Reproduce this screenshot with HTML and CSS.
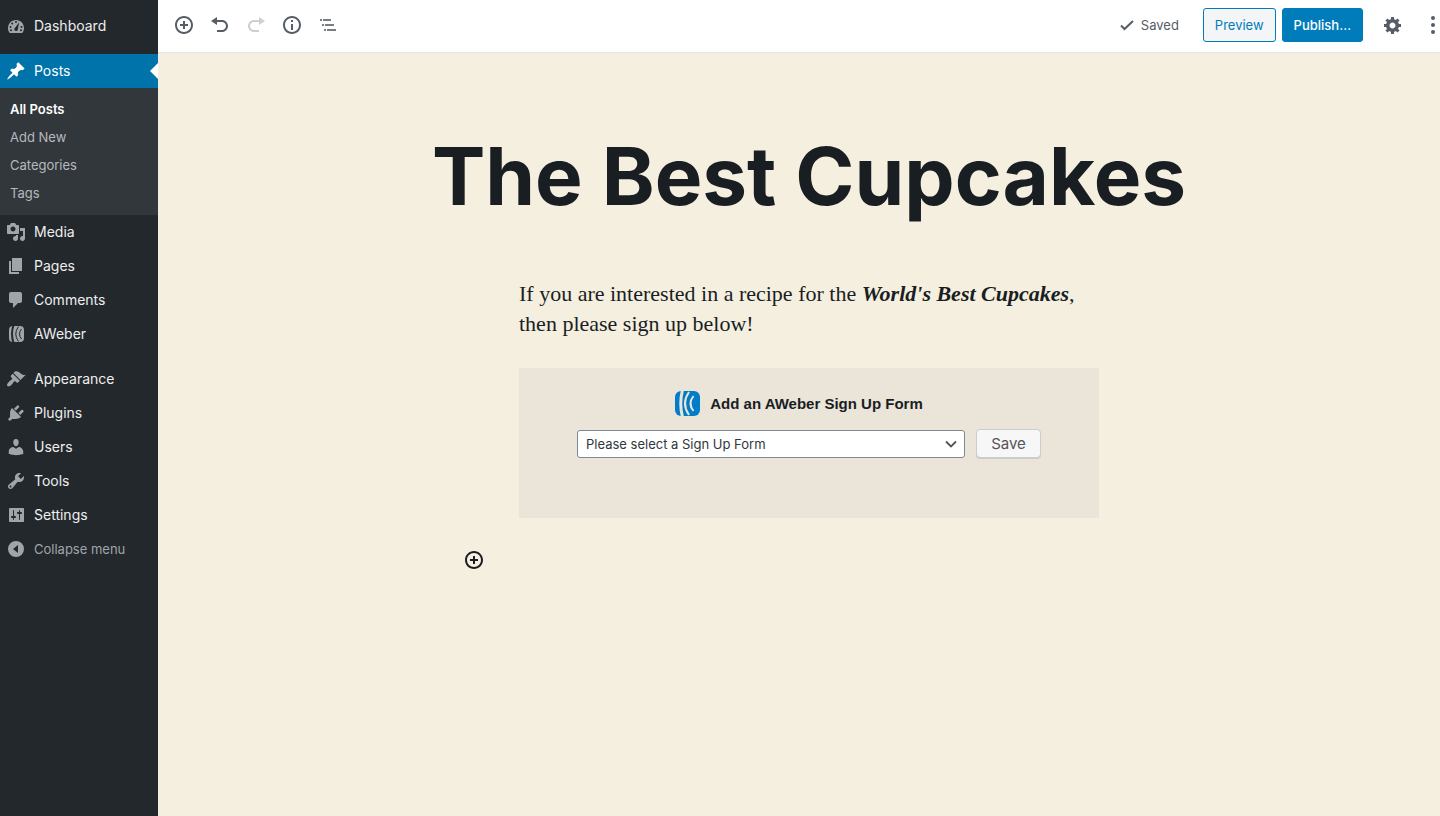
FILE: index.html
```html
<!DOCTYPE html>
<html lang="en">
<head>
<meta charset="utf-8">
<title>Edit Post</title>
<link rel="stylesheet" href="styles.css">
</head>
<body>
<div class="app">
  <nav class="sidebar" aria-label="Main menu">
    <ul class="menu">
      <li><a class="menu-link" href="#"><svg class="icon" viewBox="0 0 20 20"><path fill-rule="evenodd" d="M3.76 17h12.48c1.34-1.63 1.76-3.18 1.76-5 0-4.42-3.58-8-8-8s-8 3.58-8 8c0 1.82.42 3.37 1.76 5zM10 5a1 1 0 1 1 0 2 1 1 0 0 1 0-2zM6.200 6.500a1 1 0 1 1 0 2 1 1 0 0 1 0-2zM13.200 6.200L11.800 13.400c-.3 2.400-3.800 2-3.500-.3.100-.5.300-.9.600-1.200zM4.500 10a1 1 0 1 1 0 2 1 1 0 0 1 0-2zM15.500 10a1 1 0 1 1 0 2 1 1 0 0 1 0-2zM5 13.200a1 1 0 1 1 0 2 1 1 0 0 1 0-2zM15 13.200a1 1 0 1 1 0 2 1 1 0 0 1 0-2z"/></svg>Dashboard</a></li>
      <li class="menu-group">
        <a class="menu-link is-current" href="#"><svg class="icon" viewBox="0 0 20 20"><path d="M10.440 3.020l1.820-1.820 6.360 6.350-1.830 1.820c-1.050-.68-2.480-.57-3.410.36l-.75.75c-.92.930-1.040 2.350-.35 3.410l-1.830 1.820-2.410-2.410-2.800 2.790c-.42.420-3.380 2.710-3.800 2.290s1.860-3.390 2.280-3.810l2.790-2.790L4.100 9.360l1.830-1.820c1.050.690 2.480.570 3.400-.36l.75-.75c.930-.92 1.050-2.350.36-3.410z"/></svg>Posts</a>
        <ul class="submenu">
          <li><a class="is-active" href="#">All Posts</a></li>
          <li><a href="#">Add New</a></li>
          <li><a href="#">Categories</a></li>
          <li><a href="#">Tags</a></li>
        </ul>
      </li>
      <li><a class="menu-link" href="#"><svg class="icon" viewBox="0 0 20 20"><path fill-rule="evenodd" d="M13 11V4c0-.55-.45-1-1-1h-1.670L9 1H5L3.670 3H2c-.55 0-1 .45-1 1v7c0 .55.45 1 1 1h10c.55 0 1-.45 1-1zM7 4.500c1.380 0 2.500 1.120 2.500 2.500S8.380 9.500 7 9.500 4.500 8.380 4.500 7 5.620 4.500 7 4.500zM14 6h5v10.500c0 1.380-1.120 2.500-2.500 2.500S14 17.880 14 16.500s1.120-2.500 2.500-2.500c.17 0 .34.020.5.050V9h-3V6zm-4 8.050V13h2v3.500c0 1.380-1.120 2.500-2.500 2.500S7 17.880 7 16.500 8.120 14 9.500 14c.17 0 .34.020.5.050z"/></svg>Media</a></li>
      <li><a class="menu-link" href="#"><svg class="icon" viewBox="0 0 20 20"><path d="M6 15V2h10v13H6zm-1 1h8v2H3V5h2v11z"/></svg>Pages</a></li>
      <li><a class="menu-link" href="#"><svg class="icon" viewBox="0 0 20 20"><path d="M5 2h9c1.100 0 2 .9 2 2v7c0 1.100-.9 2-2 2h-2l-5 5v-5H5c-1.100 0-2-.9-2-2V4c0-1.100.9-2 2-2z"/></svg>Comments</a></li>
      <li><a class="menu-link" href="#"><svg class="icon" viewBox="0 0 20 20"><rect x="3" y="2" width="15" height="16" rx="4"/><g class="waves"><path d="M7.500 1Q4.500 10 7.500 19" stroke-width="2"/><path d="M12.500 2.500Q7 10 12.500 17.500M15.500 5Q11.500 10 15.500 15"/></g></svg>AWeber</a></li>
      <li class="menu-group"><a class="menu-link" href="#"><svg class="icon" viewBox="0 0 20 20"><path d="M14.480 11.060L7.410 3.990l1.500-1.500c.5-.56 2.300-.47 3.510.32 1.210.8 1.430 1.280 2.910 2.100 1.180.64 2.450 1.260 4.450.85zm-.71.71L6.700 4.700 4.930 6.470c-.39.39-.39 1.020 0 1.410l1.060 1.060c.39.39.39 1.030 0 1.420-.6.6-1.430 1.110-2.210 1.690-.35.26-.7.53-1.010.84C1.430 14.230.4 16.080 1.400 17.070c.99 1 2.840-.03 4.180-1.360.31-.31.58-.66.85-1.020.57-.78 1.080-1.610 1.690-2.210.39-.39 1.020-.39 1.410 0l1.060 1.060c.39.39 1.020.39 1.410 0z"/></svg>Appearance</a></li>
      <li><a class="menu-link" href="#"><svg class="icon" viewBox="0 0 20 20"><path d="M13.110 4.360L9.870 7.600 8 5.730l3.240-3.240c.35-.34 1.050-.2 1.560.32.52.51.66 1.210.31 1.550zm-8 1.770l.91-1.120 9.010 9.010-1.190.84c-.71.71-2.630 1.160-3.820 1.160H6.140L4.900 17.260c-.59.59-1.540.59-2.120 0-.59-.58-.59-1.530 0-2.120l1.240-1.240v-3.880c0-1.130.4-3.190 1.090-3.890zm7.260 3.970l3.240-3.240c.34-.35 1.040-.21 1.550.31.52.51.66 1.210.31 1.550l-3.240 3.250z"/></svg>Plugins</a></li>
      <li><a class="menu-link" href="#"><svg class="icon" viewBox="0 0 20 20"><path d="M10 9.250c-2.270 0-2.730-3.440-2.730-3.440C7 4.020 7.820 2 9.970 2c2.160 0 2.980 2.020 2.710 3.810 0 0-.41 3.440-2.680 3.440zm0 2.570L12.720 10c2.390 0 4.520 2.330 4.520 4.530v2.490s-3.650 1.130-7.240 1.130c-3.650 0-7.240-1.130-7.240-1.130v-2.490c0-2.250 1.940-4.480 4.470-4.480z"/></svg>Users</a></li>
      <li><a class="menu-link" href="#"><svg class="icon" viewBox="0 0 20 20"><path fill-rule="evenodd" d="M16.680 9.770c-1.340 1.340-3.300 1.670-4.950.99l-5.410 6.520c-.99.99-2.590.99-3.580 0s-.99-2.590 0-3.570l6.520-5.420c-.68-1.650-.35-3.610.99-4.950 1.280-1.280 3.120-1.620 4.720-1.060l-2.890 2.890 2.820 2.820 2.860-2.870c.53 1.580.18 3.390-1.080 4.650zM3.810 16.210c.4.39 1.040.39 1.430 0 .4-.4.4-1.040 0-1.430-.39-.4-1.030-.4-1.430 0-.39.39-.39 1.030 0 1.430z"/></svg>Tools</a></li>
      <li><a class="menu-link" href="#"><svg class="icon" viewBox="0 0 20 20"><path fill-rule="evenodd" d="M18 16V4c0-.7-.3-1-1-1H4c-.7 0-1 .3-1 1v12c0 .7.3 1 1 1h13c.7 0 1-.3 1-1zM8 11h1c.55 0 1 .45 1 1s-.45 1-1 1H8v1.500c0 .28-.22.5-.5.5s-.5-.22-.5-.5V13H6c-.55 0-1-.45-1-1s.45-1 1-1h1V5.500c0-.28.22-.5.5-.5s.5.22.5.5V11zm5-2h-1c-.55 0-1-.45-1-1s.45-1 1-1h1V5.500c0-.28.22-.5.5-.5s.5.22.5.5V7h1c.55 0 1 .45 1 1s-.45 1-1 1h-1v5.500c0 .28-.22.5-.5.5s-.5-.22-.5-.5V9z"/></svg>Settings</a></li>
      <li><button class="menu-link collapse" type="button"><svg class="icon" viewBox="0 0 20 20"><path fill-rule="evenodd" d="M10 2a8 8 0 1 1 0 16 8 8 0 0 1 0-16zM12 6l-5 4 5 4z"/></svg>Collapse menu</button></li>
    </ul>
  </nav>

  <div class="editor">
    <header class="topbar">
      <div class="tools">
        <button class="tool" type="button" aria-label="Add block"><svg class="icon" viewBox="0 0 20 20"><path d="M10 1c-5 0-9 4-9 9s4 9 9 9 9-4 9-9-4-9-9-9zm0 16c-3.900 0-7-3.100-7-7s3.100-7 7-7 7 3.100 7 7-3.100 7-7 7zm1-11H9v3H6v2h3v3h2v-3h3V9h-3V6z"/></svg></button>
        <button class="tool" type="button" aria-label="Undo"><svg class="icon" viewBox="0 0 20 20"><path d="M12 5H7V2L1 6l6 4V7h5c2.200 0 4 1.800 4 4s-1.800 4-4 4H7v2h5c3.300 0 6-2.700 6-6s-2.700-6-6-6z"/></svg></button>
        <button class="tool" type="button" aria-label="Redo" disabled><svg class="icon" viewBox="0 0 20 20"><path d="M8 5h5V2l6 4-6 4V7H8c-2.200 0-4 1.800-4 4s1.800 4 4 4h5v2H8c-3.300 0-6-2.700-6-6s2.700-6 6-6z"/></svg></button>
        <button class="tool" type="button" aria-label="Content structure"><svg class="icon" viewBox="0 0 20 20"><path d="M10 1c-5 0-9 4-9 9s4 9 9 9 9-4 9-9-4-9-9-9zm0 16c-3.900 0-7-3.100-7-7s3.100-7 7-7 7 3.100 7 7-3.100 7-7 7zM9 5h2v2H9zM9 9h2v6H9z"/></svg></button>
        <button class="tool" type="button" aria-label="Block navigation"><svg class="icon" viewBox="0 0 20 20"><path d="M2 4h2v2H2zM5 4h8v2H5zM4 9h2v2H4zM7 9h9v2H7zM6 14h2v2H6zM9 14h9v2H9z" opacity=".8"/></svg></button>
      </div>
      <div class="actions">
        <span class="saved"><svg class="check" viewBox="0 0 16 16"><path d="M2 8.500l3.500 3.500L14 4"/></svg>Saved</span>
        <button class="button preview" type="button">Preview</button>
        <button class="button publish" type="button">Publish…</button>
        <button class="tool settings" type="button" aria-label="Settings"><svg class="icon" viewBox="0 0 20 20"><path fill-rule="evenodd" d="M18 12h-2.180c-.17.7-.44 1.350-.81 1.930l1.540 1.540-2.100 2.100-1.540-1.540c-.58.36-1.230.63-1.910.79V19H8v-2.180c-.68-.16-1.330-.43-1.910-.79l-1.540 1.540-2.120-2.120 1.540-1.540c-.36-.58-.63-1.230-.79-1.910H1V9.030h2.170c.16-.7.44-1.350.8-1.940L2.430 5.550l2.100-2.100 1.540 1.540c.58-.37 1.240-.64 1.930-.81V2h3v2.180c.68.16 1.330.43 1.910.79l1.540-1.540 2.120 2.120-1.540 1.540c.36.59.64 1.240.8 1.940H18V12zm-8.500 1.500c1.660 0 3-1.340 3-3s-1.340-3-3-3-3 1.340-3 3 1.340 3 3 3z"/></svg></button>
        <button class="tool more" type="button" aria-label="More options"><svg class="icon" viewBox="0 0 20 20"><circle cx="10" cy="3" r="2"/><circle cx="10" cy="10" r="2"/><circle cx="10" cy="17" r="2"/></svg></button>
      </div>
    </header>

    <main class="canvas">
      <h1 class="post-title">The Best Cupcakes</h1>
      <div class="post-body">
        <p class="paragraph">If you are interested in a recipe for the <strong><em>World's Best Cupcakes</em></strong>, then please sign up below!</p>
        <form class="signup">
          <label class="signup-title" for="form-select"><svg class="logo" viewBox="0 0 25 25"><rect width="25" height="25" rx="6"/><g class="waves"><path d="M7.500-1Q4 12.500 7.500 26" stroke-width="3"/><path d="M14 1Q6 12.500 14 24M18.500 5Q12.500 12.500 18.500 20"/></g></svg>Add an AWeber Sign Up Form</label>
          <div class="signup-row">
            <select class="select" id="form-select"><option>Please select a Sign Up Form</option></select>
            <button class="save" type="button">Save</button>
          </div>
        </form>
      </div>
      <div class="appender">
        <button class="tool dark" type="button" aria-label="Add block"><svg class="icon" viewBox="0 0 20 20"><path d="M10 1c-5 0-9 4-9 9s4 9 9 9 9-4 9-9-4-9-9-9zm0 16c-3.900 0-7-3.100-7-7s3.100-7 7-7 7 3.100 7 7-3.100 7-7 7zm1-11H9v3H6v2h3v3h2v-3h3V9h-3V6z"/></svg></button>
      </div>
    </main>
  </div>
</div>
</body>
</html>
```
FILE: styles.css
```css
* { box-sizing: border-box; }

body {
  margin: 0;
  font-family: Inter, sans-serif;
  font-size: 13px;
  color: #191e23;
}

button, select { font: inherit; }
ul { list-style: none; margin: 0; padding: 0; }
a { text-decoration: none; }

.app { display: flex; min-height: 100vh; }

.icon { width: 20px; height: 20px; fill: currentColor; flex: none; }
.waves { fill: none; stroke: #23282d; stroke-width: 1; }

/* Sidebar */
.sidebar { width: 158px; flex: none; padding-top: 9px; background: #23282d; }
.menu-group { margin-top: 11px; }

.menu-link {
  display: flex;
  align-items: center;
  gap: 8px;
  width: 100%;
  height: 34px;
  padding: 0 6px;
  border: 0;
  background: none;
  color: #eee;
  font-size: 14px;
  line-height: 18px;
}
.menu-link .icon { color: #a0a5aa; }

.is-current { position: relative; background: #0073aa; color: #fff; }
.is-current .icon { color: #fff; }
.is-current::after {
  content: "";
  position: absolute;
  right: 0;
  top: 9px;
  border: 8px solid transparent;
  border-left-width: 0;
  border-right-color: #fff;
}

.submenu { padding: 7px 0 8px; background: #32373c; }
.submenu a { display: block; padding: 0 10px; line-height: 28px; color: #b4b9be; }
.submenu .is-active { color: #fff; font-weight: 600; }
.collapse { color: #a0a5aa; font-size: 13px; }

/* Editor header */
.editor { flex: 1; min-width: 0; display: flex; flex-direction: column; background: #f5efe0; }

.topbar {
  display: flex;
  justify-content: space-between;
  height: 53px;
  padding: 0 0 2px 8px;
  background: #fff;
  border-bottom: 1px solid #e2e4e7;
  overflow: hidden;
}
.tools, .actions { display: flex; align-items: center; }

.tool {
  display: flex;
  align-items: center;
  justify-content: center;
  width: 36px;
  height: 36px;
  padding: 0;
  border: 0;
  background: none;
  color: #555d66;
}
.tool:disabled { color: #ccd0d4; }
.tool.dark { color: #191e23; }

.saved { display: flex; align-items: center; gap: 6px; margin-right: 24px; color: #555d66; }
.check { width: 16px; height: 16px; fill: none; stroke: currentColor; stroke-width: 2; }

.button { height: 34px; padding: 0 11px; border: 1px solid #007cba; border-radius: 3px; }
.preview { margin-right: 6px; background: #f3f5f6; color: #007cba; }
.publish { background: #007cba; color: #fff; font-weight: 500; }
.settings { margin-left: 12px; }
.more { width: 20px; margin: 0 -3px 0 12px; }

/* Post */
.canvas { flex: 1; padding: 78px 0 40px 20px; }

.post-title {
  margin: 0;
  text-align: center;
  font-size: 80px;
  font-weight: 700;
  line-height: 90px;
}

.post-body { max-width: 580px; margin: 58px auto 0; }

.paragraph {
  margin: 0 0 29px;
  font-family: "Liberation Serif", serif;
  font-size: 22px;
  line-height: 30px;
}

.signup {
  display: flex;
  flex-direction: column;
  align-items: center;
  gap: 13px;
  min-height: 150px;
  padding: 23px 58px;
  background: #ebe4d9;
}
.signup-title {
  display: flex;
  align-items: center;
  gap: 10px;
  margin-right: 20px;
  font-family: "Liberation Sans", sans-serif;
  font-size: 15px;
  font-weight: 700;
}
.logo { width: 25px; height: 25px; fill: #007cc8; }
.logo .waves { stroke: #ebe4d9; stroke-width: 2; }

.signup-row { display: flex; align-items: center; gap: 11px; width: 100%; }

.select {
  flex: 1;
  height: 28px;
  padding: 0 8px;
  appearance: none;
  border: 1px solid #7e8993;
  border-radius: 3px;
  background: #fff url("data:image/svg+xml,%3Csvg xmlns='http://www.w3.org/2000/svg' viewBox='0 0 12 12'%3E%3Cpath d='M1 3.500l5 5 5-5' fill='none' stroke='%23555' stroke-width='1.800'/%3E%3C/svg%3E") no-repeat right 7px center / 12px 12px;
  color: #32373c;
}

.save {
  width: 65px;
  height: 29px;
  padding: 0;
  border: 1px solid #ccc;
  border-radius: 4px;
  background: #f7f7f7;
  box-shadow: 0 1px 0 #ccc;
  color: #555;
  font-size: 15px;
}

.appender { max-width: 706px; margin: 24px auto 0; }
```
